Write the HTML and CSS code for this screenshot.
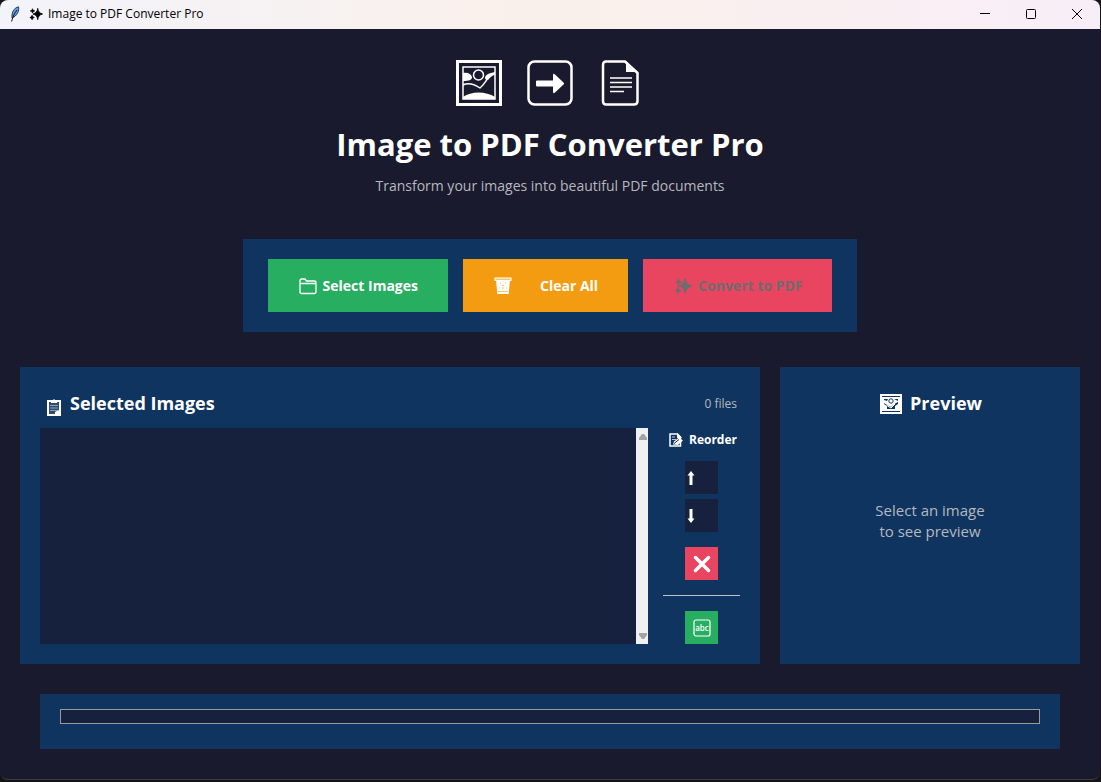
FILE: index.html
```html
<!DOCTYPE html>
<html lang="en">
<head>
<meta charset="utf-8">
<title>Image to PDF Converter Pro</title>
<link rel="stylesheet" href="styles.css">
</head>
<body>
<svg class="defs" aria-hidden="true">
  <symbol id="sparkles" viewBox="0 0 16 16">
    <path d="M10 1.500c.7 3.800 1.600 5.300 5.500 6.500-3.900 1.200-4.800 2.700-5.500 6.500-.7-3.800-1.600-5.300-5.500-6.500 3.900-1.200 4.800-2.700 5.500-6.500zM4 2l.7 1.800 1.800.7-1.800.7L4 7l-.7-1.800-1.800-.7 1.800-.7zM3.500 9.500l.8 1.700 1.700.8-1.700.8-.8 1.700-.8-1.700L1 12l1.700-.8z" fill="currentColor" stroke="currentColor" stroke-width=".9"/>
  </symbol>
</svg>
<div class="window">
  <header class="titlebar">
    <svg class="feather" viewBox="0 0 12 16"><path d="M9.500.8C5 2 2.500 6 3 12c5-2 7.500-7 6.500-11.200z" fill="#5aa2ea" stroke="#15181f" stroke-width=".8"/><path d="M8 4C5.500 7 4 10.500 2.500 15.500" fill="none" stroke="#15181f"/></svg>
    <svg class="spark-small"><use href="#sparkles"/></svg>
    <span class="caption">Image to PDF Converter Pro</span>
    <div class="window-controls">
      <button type="button" aria-label="Minimize"><svg viewBox="0 0 12 12"><path d="M1 5.500h10"/></svg></button>
      <button type="button" aria-label="Maximize"><svg viewBox="0 0 12 12"><rect x="1.500" y="1.500" width="9" height="9" rx="1"/></svg></button>
      <button type="button" aria-label="Close"><svg viewBox="0 0 12 12"><path d="M1 1l10 10M11 1L1 11"/></svg></button>
    </div>
  </header>

  <main class="app">
    <section class="hero">
      <div class="hero-icons">
        <svg viewBox="0 0 46 46"><rect x="1.500" y="1.500" width="43" height="43" fill="none" stroke="#fff" stroke-width="3"/><rect x="7" y="7" width="32" height="32" fill="none" stroke="#fff" stroke-width="1.500"/><circle cx="22.500" cy="15" r="5" fill="none" stroke="#fff" stroke-width="1.500"/><path d="M7 13c5-1 8 1 9 4 0 3-3 4-9 4zM39 12c-6 1-10 3-10 6 0 1 1 2 3 2 2-3 5-5 7-5zM7 39v-2c8-6 23-6 32 0v2z" fill="#fff"/><path d="M7 25c6-3 11-1 17 3 4-3 6-8 10-12" fill="none" stroke="#fff" stroke-width="1.500"/></svg>
        <svg viewBox="0 0 46 46"><rect x="1.500" y="1.500" width="43" height="43" rx="6" fill="none" stroke="#fff" stroke-width="2.500"/><path d="M10 20.500h16v-5c0-2 1-2 2-1l8.500 8c.8.700.8 1.300 0 2l-8.500 8c-1 1-2 1-2-1v-5H10c-1 0-1-1-1-1v-4s0-1 1-1z" fill="#fff"/></svg>
        <svg viewBox="0 0 46 46"><path d="M8 1.500h19L39.500 13v28c0 2-1 3.500-3.500 3.500H8c-2 0-3-1-3-3.500V5c0-2.500 1-3.500 3-3.500z" fill="none" stroke="#fff" stroke-width="2.500"/><path d="M28 1v11h12z" fill="#fff"/><path d="M12 18h22M12 22.500h22M12 27h22M12 31.500h14" stroke="#fff" stroke-width="1.500"/></svg>
      </div>
      <h1>Image to PDF Converter Pro</h1>
      <p>Transform your images into beautiful PDF documents</p>
    </section>

    <section class="actions">
      <button type="button" class="action green">
        <svg viewBox="0 0 18 18"><path d="M1 15V3.500C1 2.500 1.500 2 2.500 2H6l1.500 2h8c1 0 1.500.5 1.500 1.500V15c0 1-.5 1.500-1.500 1.500h-13C1.500 16.500 1 16 1 15zM1 6.500h16" fill="none" stroke="#fff" stroke-width="1.300"/></svg>
        <span>Select Images</span>
      </button>
      <button type="button" class="action orange">
        <svg viewBox="0 0 18 18"><path d="M2 3h14l-1.200 12v2H3.200v-2z" fill="#fff"/><path d="M1 1h16v2.500H1z" fill="#f8c272" stroke="#fff" stroke-width="1.200"/><path d="M6 6h1m4 0h1M8 8.500h2M5 11h1m2 0h2m2 0h1M4 14.500h10" stroke="#f8c272"/></svg>
        <span>Clear All</span>
      </button>
      <button type="button" class="action red" disabled>
        <svg><use href="#sparkles"/></svg>
        <span>Convert to PDF</span>
      </button>
    </section>

    <div class="columns">
      <section class="panel files">
        <div class="files-head">
          <svg viewBox="0 0 16 18"><rect x="2" y="2" width="12" height="14" fill="#2d4c70" stroke="#fff" stroke-width="2"/><path d="M5 1h2l1-1 1 1h2v3H5z" fill="#fff"/><path d="M4 6.500h8M4 9h8M4 11.500h8" stroke="#8fa2b7"/><path d="M9 13l4-2v5H9z" fill="#fff"/></svg>
          <h2 id="files-title">Selected Images</h2>
          <span class="count">0 files</span>
        </div>
        <div class="files-body">
          <select class="list" multiple aria-labelledby="files-title"></select>
          <div class="scrollbar" aria-hidden="true">
            <svg viewBox="0 0 8 6"><path d="M3 0h2l3 4v2H0V4z"/></svg>
            <svg viewBox="0 0 8 6"><path d="M0 0h8v2L5 6H3L0 2z"/></svg>
          </div>
          <div class="tools">
            <h3><svg viewBox="0 0 14 14"><path d="M1 1h7.500l3 3v9H1z" fill="none" stroke="#fff" stroke-width="1.500"/><path d="M8 0v5h5z" fill="#fff"/><path d="M3 4h3M3 6.500h4" stroke="#b8c5d2"/><path d="M4 11.500l1-3 5-4 4 3-5 4.500z" fill="#fff"/><path d="M5 10.500l5-4" stroke="#0f3460"/></svg><span>Reorder</span></h3>
            <button type="button" class="tool move" aria-label="Move up"><svg viewBox="0 0 8 14"><path d="M4 0l3.500 4.500H5.500V14h-3V4.500h-2z"/></svg></button>
            <button type="button" class="tool move" aria-label="Move down"><svg viewBox="0 0 8 14"><path d="M4 14L.5 9.500h2V0h3v9.500h2z"/></svg></button>
            <button type="button" class="tool remove" aria-label="Remove"><svg viewBox="0 0 18 18"><path d="M2.500 2.500l13 13M15.500 2.500l-13 13" stroke="#fff" stroke-width="3.500" stroke-linecap="round"/></svg></button>
            <hr>
            <button type="button" class="tool rename" aria-label="Sort by name"><svg viewBox="0 0 18 18"><rect x="1" y="1" width="16" height="16" rx="2" fill="none" stroke="#fff" stroke-width="1.200"/><text x="9" y="11.500" text-anchor="middle">abc</text></svg></button>
          </div>
        </div>
      </section>

      <section class="panel preview">
        <h2><svg viewBox="0 0 22 22"><path d="M0 1h22v20H0z" fill="#fff"/><path d="M2 3.500h18M2 18.500h18" stroke="#0f3460"/><path d="M4 6h4l-1 2-3-1zM14 6h4v2l-2-1zM4 10l3 2 4 2 5-4 2-1v2l-3 2v3H7v-3l-3-2z" fill="#0f3460"/><circle cx="11" cy="8" r="2.200" fill="#fff" stroke="#0f3460"/><path d="M7 12.500l4 2.500 4-4" fill="none" stroke="#fff"/></svg><span>Preview</span></h2>
        <p>Select an image<br>to see preview</p>
      </section>
    </div>

    <section class="status">
      <progress value="0" max="100" aria-label="Conversion progress"></progress>
    </section>
  </main>
</div>
</body>
</html>
```
FILE: styles.css
```css
* {
  box-sizing: border-box;
}

body {
  margin: 0;
  background: #151515;
  color: #fff;
  font-family: "Segoe UI", "Open Sans", "Noto Sans", sans-serif;
}

h1, h2, h3, p {
  margin: 0;
}

button {
  border: 0;
  padding: 0;
  font: inherit;
  color: inherit;
}

svg {
  display: block;
  flex: none;
}

.defs {
  display: none;
}

.window {
  display: flex;
  flex-direction: column;
  min-height: calc(100vh - 2px);
  margin-right: 1px;
  overflow: hidden;
  background: #1a1a2e;
  border-bottom: 1px solid #3c3c3c;
  border-radius: 8px;
}

.titlebar {
  display: flex;
  align-items: center;
  height: 29px;
  padding: 0 0 2px 9px;
  background: linear-gradient(90deg, #f3f3fa, #faf0ea 50%, #f8eef8);
  color: #000;
}

.feather {
  width: 12px;
  height: 16px;
  margin-right: 8px;
}

.spark-small {
  width: 14px;
  height: 14px;
  margin-right: 5px;
}

.caption {
  font-size: 12px;
}

.window-controls {
  display: flex;
  margin-left: auto;
}

.window-controls button {
  display: grid;
  place-items: center;
  width: 46px;
  height: 26px;
  background: none;
}

.window-controls svg {
  width: 12px;
  height: 12px;
  fill: none;
  stroke: #000;
}

.app {
  display: flex;
  flex: 1;
  flex-direction: column;
  padding: 31px 20px 30px;
}

.hero {
  display: flex;
  flex-direction: column;
  align-items: center;
  text-align: center;
}

.hero-icons {
  display: flex;
  gap: 25px;
}

.hero-icons svg {
  width: 46px;
  height: 46px;
}

h1 {
  margin-top: 14px;
  font-size: 31px;
  line-height: 48px;
}

.hero p {
  margin-top: 6px;
  color: #b5b8bd;
  font-size: 14px;
  line-height: 24px;
}

.actions {
  display: flex;
  align-self: center;
  gap: 15px;
  margin-top: 41px;
  padding: 20px 25px;
  background: #0f3460;
}

.action {
  display: flex;
  align-items: center;
  height: 53px;
  padding: 0 30px 0 31px;
  gap: 6px;
  font-size: 14px;
  font-weight: 700;
}

.action svg {
  width: 18px;
  height: 18px;
}

.green {
  background: #27ae60;
}

.orange {
  gap: 28px;
  background: #f39c12;
}

.red {
  background: #e94560;
  color: #6d6d6d;
}

.columns {
  display: flex;
  flex: 1;
  gap: 20px;
  margin-top: 35px;
}

.panel {
  padding: 20px;
  background: #0f3460;
}

.files {
  display: flex;
  flex: 1;
  flex-direction: column;
}

h2 {
  font-size: 18px;
  line-height: 33px;
}

.files-head {
  display: flex;
  align-items: center;
  height: 41px;
  padding: 0 3px 8px 6px;
}

.files-head svg {
  width: 16px;
  height: 18px;
  margin: 8px 8px 0 0;
}

.count {
  margin-left: auto;
  color: #b5b8bd;
  font-size: 12px;
}

.files-body {
  display: flex;
  flex: 1;
}

.list {
  flex: 1;
  min-width: 0;
  height: auto;
  border: 0;
  border-radius: 0;
  background: #16213e;
  color: #fff;
  outline: 0;
}

.scrollbar {
  display: flex;
  flex-direction: column;
  align-items: flex-end;
  justify-content: space-between;
  width: 12px;
  padding: 6px 1px 5px 0;
  background: #f0f0f0;
}

.scrollbar svg {
  width: 8px;
  height: 6px;
  fill: #a3a3a3;
}

.tools {
  display: flex;
  flex-direction: column;
  align-items: center;
  width: 77px;
  margin-left: 15px;
}

h3 {
  display: flex;
  align-items: center;
  align-self: flex-end;
  gap: 6px;
  margin-bottom: 9px;
  padding-right: 3px;
  font-size: 12px;
  line-height: 24px;
}

h3 svg {
  width: 14px;
  height: 14px;
}

.tool {
  display: flex;
  align-items: center;
  justify-content: center;
  width: 33px;
  height: 33px;
}

.tool svg {
  width: 18px;
  height: 18px;
}

.move {
  justify-content: flex-start;
  margin-bottom: 5px;
  padding-left: 2px;
  background: #16213e;
}

.move svg {
  width: 8px;
  height: 14px;
  fill: #fff;
}

.remove {
  margin-top: 10px;
  background: #e94560;
}

.tools hr {
  width: 100%;
  height: 1px;
  margin: 15px 0;
  border: 0;
  background: #bdc3c7;
}

.rename {
  background: #27ae60;
}

.rename text {
  fill: #fff;
  font-size: 8px;
  font-weight: 600;
}

.preview {
  display: flex;
  flex-direction: column;
  align-items: center;
  width: 300px;
}

.preview h2 {
  display: flex;
  align-items: center;
  gap: 8px;
  padding-left: 2px;
}

.preview h2 svg {
  width: 22px;
  height: 22px;
}

.preview p {
  margin: auto;
  padding-bottom: 22px;
  color: #b5b8bd;
  font-size: 15px;
  line-height: 21px;
  text-align: center;
}

.status {
  margin: 30px 20px 0;
  padding: 15px 20px 25px;
  background: #0f3460;
}

progress {
  display: block;
  width: 100%;
  height: 15px;
  appearance: none;
  border: 1px solid #9a9a9a;
  background: #16213e;
}

progress::-webkit-progress-bar {
  background: #16213e;
}

progress::-webkit-progress-value {
  background: #27ae60;
}
```
